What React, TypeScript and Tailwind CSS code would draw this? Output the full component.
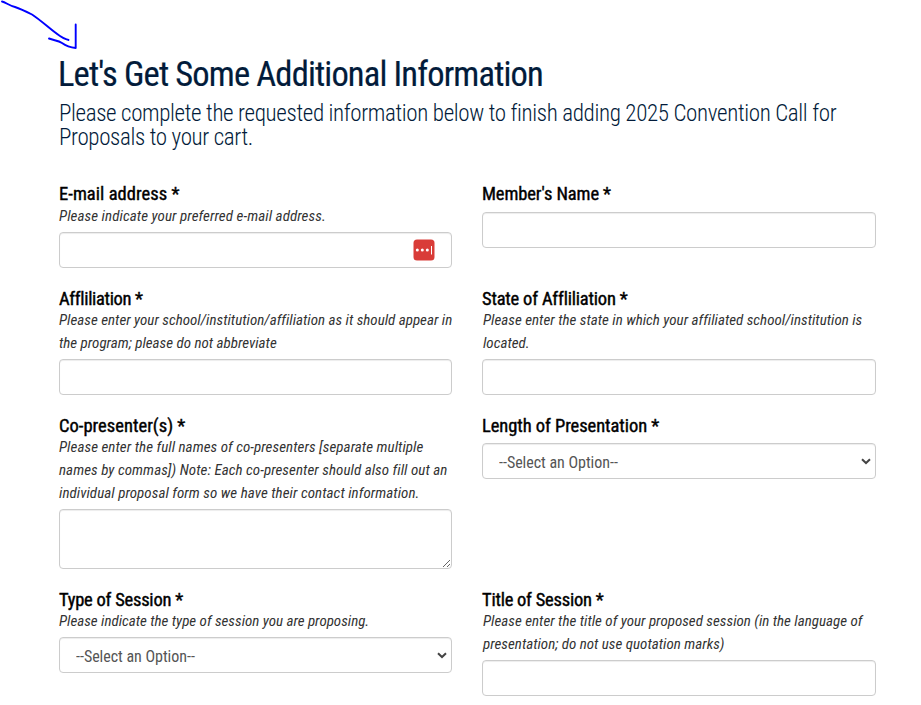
import type { ReactNode } from "react";

type FieldKind = "text" | "select" | "textarea";

interface Field {
  id: string;
  label: string;
  labelClass: string;
  hint?: string[];
  hintClass?: string;
  kind: FieldKind;
  badge?: boolean;
}

const fields: Field[] = [
  {
    id: "email",
    label: "E-mail address *",
    labelClass: "h-[21px] tracking-[0.05px]",
    hint: ["Please indicate your preferred e-mail address."],
    hintClass: "tracking-[0.08px]",
    kind: "text",
    badge: true,
  },
  { id: "member", label: "Member's Name *", labelClass: "h-[21px] tracking-[-0.1px]", kind: "text" },
  {
    id: "affiliation",
    label: "Affliliation *",
    labelClass: "h-5 tracking-[-0.34px]",
    hint: [
      "Please enter your school/institution/affiliation as it should appear in",
      "the program; please do not abbreviate",
    ],
    hintClass: "tracking-[0.015px]",
    kind: "text",
  },
  {
    id: "state",
    label: "State of Affliliation *",
    labelClass: "h-5 tracking-[-0.2px]",
    hint: ["Please enter the state in which your affiliated school/institution is", "located."],
    hintClass: "pl-px tracking-[0.02px]",
    kind: "text",
  },
  {
    id: "copresenters",
    label: "Co-presenter(s) *",
    labelClass: "h-5 tracking-[0.03px]",
    hint: [
      "Please enter the full names of co-presenters [separate multiple",
      "names by commas]) Note: Each co-presenter should also fill out an",
      "individual proposal form so we have their contact information.",
    ],
    hintClass: "tracking-[0.06px]",
    kind: "textarea",
  },
  { id: "length", label: "Length of Presentation *", labelClass: "h-5 tracking-[-0.06px]", kind: "select" },
  {
    id: "type",
    label: "Type of Session *",
    labelClass: "h-5 tracking-[-0.24px]",
    hint: ["Please indicate the type of session you are proposing."],
    hintClass: "tracking-normal",
    kind: "select",
  },
  {
    id: "title",
    label: "Title of Session *",
    labelClass: "h-5 tracking-[-0.24px]",
    hint: [
      "Please enter the title of your proposed session (in the language of",
      "presentation; do not use quotation marks)",
    ],
    hintClass: "pl-px tracking-[0.015px]",
    kind: "text",
  },
];

const controlClass =
  "block w-full rounded border border-[#ccc] bg-white text-[#555] shadow-[inset_0_1px_1px_rgba(0,0,0,0.075)] outline-none";

const PasswordBadge = () => (
  <svg className="absolute top-[7px] right-[17px]" width="22" height="22" viewBox="0 0 22 22">
    <rect x="0.5" y="0.5" width="21" height="21" rx="3.5" fill="#d93c38" />
    <circle cx="4.3" cy="11" r="1.5" fill="#fff" />
    <circle cx="9.3" cy="11" r="1.5" fill="#fff" />
    <circle cx="14.3" cy="11" r="1.5" fill="#fff" />
    <rect x="18" y="7" width="1" height="8.5" fill="#fff" />
  </svg>
);

const Control = ({ field }: { field: Field }) => {
  if (field.kind === "textarea") {
    return <textarea id={field.id} className={`${controlClass} h-[60px] resize`} />;
  }
  if (field.kind === "select") {
    return (
      <div className="relative">
        <select
          id={field.id}
          className={`${controlClass} h-9 appearance-none pt-1 pl-4 text-[16px] tracking-[-0.03px]`}
        >
          <option>--Select an Option--</option>
        </select>
        <svg
          className="pointer-events-none absolute top-[15px] right-[5px]"
          width="10"
          height="7"
          viewBox="0 0 10 7"
          fill="none"
          stroke="#444"
          strokeWidth="2"
        >
          <path d="M1 1.2 L5 5 L9 1.2" />
        </svg>
      </div>
    );
  }
  return (
    <div className="relative">
      <input id={field.id} type="text" className={`${controlClass} h-9 px-3`} />
      {field.badge && <PasswordBadge />}
    </div>
  );
};

const FormField = ({ field }: { field: Field }) => (
  <div className="flex flex-col">
    <label
      htmlFor={field.id}
      className={`text-[18.5px] leading-5 whitespace-nowrap text-black [-webkit-text-stroke:0.4px_black] ${field.labelClass}`}
    >
      {field.label}
    </label>
    {field.hint && (
      <p className={`text-[15px] leading-[23px] whitespace-nowrap text-[#333] italic ${field.hintClass}`}>
        {field.hint.map((line) => (
          <span key={line} className="block">
            {line}
          </span>
        ))}
      </p>
    )}
    <div className={field.hint ? "mt-1" : "mt-[7px]"}>
      <Control field={field} />
    </div>
  </div>
);

// hand drawn pointer in the top left corner
const InkArrow = () => (
  <svg
    className="absolute top-0 left-0"
    width="90"
    height="56"
    viewBox="0 0 90 56"
    fill="none"
    stroke="#0000ff"
    strokeWidth="1.9"
    strokeLinecap="round"
    strokeLinejoin="round"
  >
    <path d="M2 1.5 C6 2.5 9 5.5 15 7 C21 9 27 12 32 14.5 C42 21 52 31 60 36 C64 39 66 39 68.500 40" />
    <path d="M75.700 24.500 V48 C70 47.500 66 46 62 43 C58 40.500 54 40.500 49 38.500" />
  </svg>
);

const Heading = ({ title, children }: { title: string; children: ReactNode }) => (
  <header className="text-[#021b3a]">
    <h1 className="-ml-px text-[34.5px] leading-10 tracking-[-0.85px] whitespace-nowrap [-webkit-text-stroke:0.2px_#021b3a]">
      {title}
    </h1>
    <p className="mt-2 text-[23px] leading-6 font-light tracking-[-0.36px] whitespace-nowrap">{children}</p>
  </header>
);

export default function App() {
  return (
    <main className="relative h-[705px] w-[921px] overflow-hidden bg-white pt-[54px] pr-[45px] pl-[59px] font-['Roboto_Condensed',Roboto,sans-serif]">
      <InkArrow />
      <Heading title="Let's Get Some Additional Information">
        Please complete the requested information below to finish adding 2025 Convention Call for
        <br />
        Proposals to your cart.
      </Heading>
      <form className="mt-[34px] grid grid-cols-[393px_394px] gap-x-[30px] gap-y-[21px]">
        {fields.map((field) => (
          <FormField key={field.id} field={field} />
        ))}
      </form>
    </main>
  );
}
